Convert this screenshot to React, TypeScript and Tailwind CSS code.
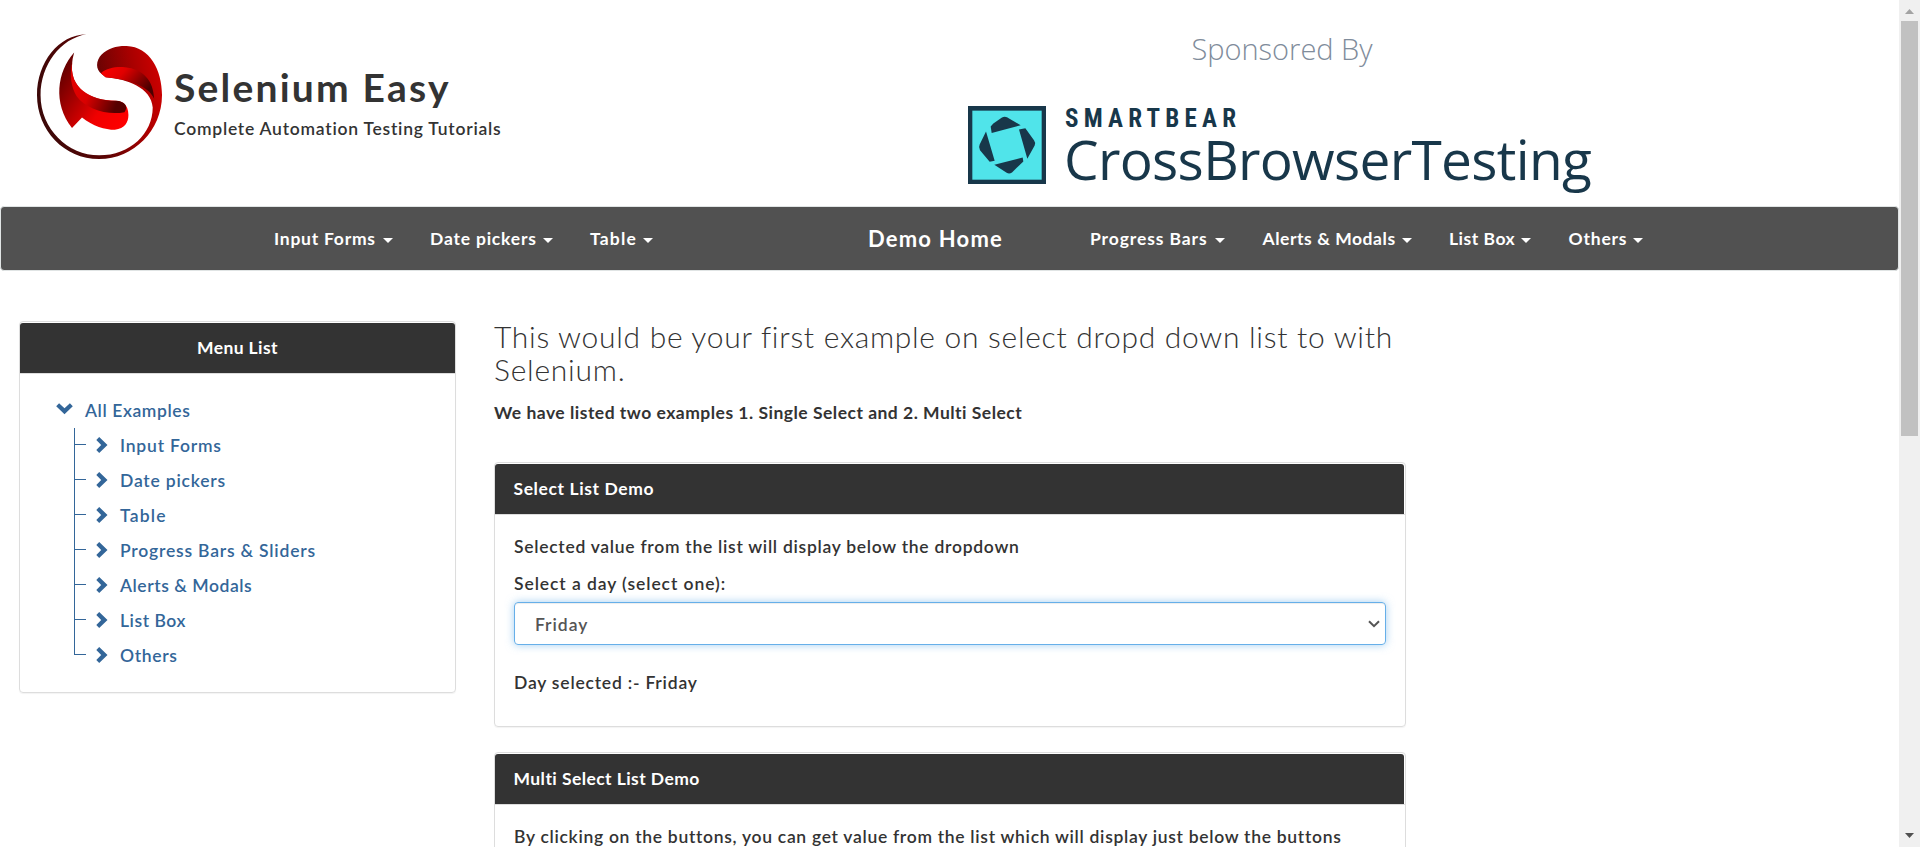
import { useState } from 'react';

const navLeft = [
  { label: 'Input Forms', box: 'w-[119px]', tracking: 'tracking-[0.75px]' },
  { label: 'Date pickers', box: 'w-[123px]', tracking: 'tracking-[0.8px]' },
  { label: 'Table', box: 'w-[63px]', tracking: 'tracking-[1.2px]' },
];

const navRight = [
  { label: 'Progress Bars', box: 'w-[135px]', tracking: 'tracking-[0.9px]' },
  { label: 'Alerts & Modals', box: 'w-[149px]', tracking: 'tracking-[0.55px]' },
  { label: 'List Box', box: 'w-[82px]', tracking: 'tracking-[0.5px]' },
  { label: 'Others', box: 'w-[74px]', tracking: 'tracking-[0.8px]' },
];

const tree = [
  { label: 'Input Forms', tracking: 'tracking-[0.8px]' },
  { label: 'Date pickers', tracking: 'tracking-[0.8px]' },
  { label: 'Table', tracking: 'tracking-[1.2px]' },
  { label: 'Progress Bars & Sliders', tracking: 'tracking-[0.8px]' },
  { label: 'Alerts & Modals', tracking: 'tracking-[0.55px]' },
  { label: 'List Box', tracking: 'tracking-[0.55px]' },
  { label: 'Others', tracking: 'tracking-[0.68px]' },
];

function SeleniumLogo() {
  return (
    <svg className="h-[125px] w-[125px] shrink-0" viewBox="104 101 350 376" preserveAspectRatio="none">
      <defs>
        <linearGradient id="ring" x1="0" x2="1" y1="0.6" y2="0.4">
          <stop offset="0" stopColor="#3a0808" />
          <stop offset="0.45" stopColor="#5a0404" />
          <stop offset="0.8" stopColor="#a80000" />
          <stop offset="1" stopColor="#cc0000" />
        </linearGradient>
        <linearGradient id="fold" x1="0" x2="1" y1="0" y2="0.5">
          <stop offset="0" stopColor="#ff0000" />
          <stop offset="0.4" stopColor="#e00000" />
          <stop offset="1" stopColor="#4a0000" />
        </linearGradient>
        <linearGradient id="leaf" x1="0" x2="1" y1="0.2" y2="0.9">
          <stop offset="0" stopColor="#5c0000" />
          <stop offset="0.3" stopColor="#a00000" />
          <stop offset="0.65" stopColor="#f00000" />
          <stop offset="1" stopColor="#ff0000" />
        </linearGradient>
        <linearGradient id="band" x1="0" x2="1" y1="0" y2="0.4">
          <stop offset="0" stopColor="#e80000" />
          <stop offset="0.5" stopColor="#d80000" />
          <stop offset="1" stopColor="#560000" />
        </linearGradient>
      </defs>
      <path
        fill="url(#ring)"
        d="M285 221C266 205 270 180 285 163C302 143 330 136 355 137C420 139 454 210 454 285C454 390 375 477 278 477C180 477 104 390 104 285C104 185 165 104 242 102C170 115 114 195 114 285C114 385 190 466 278 466C365 466 428 400 428 322C424 262 355 236 296 231Z"
      />
      <path fill="url(#fold)" d="M283 219C300 203 325 199 350 201C400 206 430 240 432 296C418 258 362 237 296 231Z" />
      <path
        fill="url(#leaf)"
        d="M208 157C160 215 148 310 202 384L230 352C260 378 295 389 322 389C350 386 360 367 360 345C360 312 342 303 325 302C250 302 180 262 208 157Z"
      />
      <path fill="url(#band)" d="M203 185C192 262 255 302 325 302C350 303 361 320 349 336C300 347 240 325 215 288C200 262 194 225 203 185Z" />
    </svg>
  );
}

function SmartBearMark() {
  return (
    <svg className="mt-px h-[78px] w-[78px] shrink-0" viewBox="24 31 234 235" preserveAspectRatio="none">
      <rect x="24" y="31" width="234" height="235" fill="#18374a" />
      <rect x="37" y="45" width="208" height="208" fill="#50e4ea" />
      <g fill="#18374a">
        <path d="M92 93L100 84L126 66Q133 62 141 65L182 89L95 112Z" />
        <path d="M177 102L196 98L222 134Q228 142 224 150L202 190Z" />
        <path d="M103 208L188 186L190 198L156 231Q148 237 140 232Z" />
        <path d="M78 108L104 196L89 199L60 164Q55 155 59 147Z" />
      </g>
    </svg>
  );
}

function NavItem({ label, box, tracking }: { label: string; box: string; tracking: string }) {
  return (
    <a className={`flex items-center justify-between font-bold whitespace-nowrap ${box}`}>
      <span className={tracking}>{label}</span>
      <span className="mt-[3px] block h-0 w-0 border-x-[5px] border-t-[5px] border-x-transparent border-t-white" />
    </a>
  );
}

function TreeRow({ label, tracking, last }: { label: string; tracking: string; last: boolean }) {
  return (
    <li className="flex h-[35px]">
      <span className="flex w-[12px] flex-col">
        <span className="h-[17px] border-b border-l border-[#336699]" />
        {!last && <span className="flex-1 border-l border-[#336699]" />}
      </span>
      <svg className="mt-[9px] ml-[10px] h-[16px] w-[12px]" viewBox="0 0 12 16">
        <path d="M3.2 0L11.5 8L3.2 16L0.3 13.1L5.2 8L0.3 2.9Z" fill="#336699" />
      </svg>
      <span className={`mt-[5px] ml-[12px] ${tracking}`}>{label}</span>
    </li>
  );
}

function Heading({ children, className }: { children: React.ReactNode; className: string }) {
  return <div className={`mt-px h-[50px] rounded-t-[3px] bg-[#333] pt-3 font-bold text-white ${className}`}>{children}</div>;
}

export default function App() {
  const [day] = useState('Friday');
  return (
    <div className="flex h-[847px] w-[1920px] overflow-hidden bg-white font-[Lato,sans-serif] text-[17.5px] leading-[25px] font-semibold text-[#333]">
      <div className="flex h-full w-[1899px] flex-col">
        <header className="flex h-[206px] shrink-0">
          <div className="flex w-[968px] pl-[37px]">
            <div className="pt-[34px]">
              <SeleniumLogo />
            </div>
            <div className="pt-[64px] pl-3">
              <h1 className="text-[39px] leading-[46px] font-bold tracking-[2.2px]">Selenium Easy</h1>
              <p className="mt-[6px] tracking-[0.76px]">Complete Automation Testing Tutorials</p>
            </div>
          </div>
          <div className="w-[628px] pt-[29px] font-['Open_Sans',sans-serif]">
            <p className="text-center text-[29px] leading-[40px] font-light text-[#7f8c9b]">Sponsored By</p>
            <div className="mt-[36px] flex text-[#18374a]">
              <SmartBearMark />
              <div className="pt-[2px] pl-[18px]">
                <p className="pl-px font-['Roboto_Condensed',Roboto,sans-serif] text-[25px] leading-[24px] font-bold tracking-[5.2px]">SMARTBEAR</p>
                <p className="text-[55px] leading-[55px] font-normal tracking-[-0.7px]">CrossBrowserTesting</p>
              </div>
            </div>
          </div>
        </header>

        <nav className="flex h-[65px] shrink-0 rounded-[4px] border border-[#e0e4e4] bg-[#515151] pl-[273px] text-white">
          <div className="flex w-[594px] gap-[37px]">
            {navLeft.map((n) => (
              <NavItem key={n.label} {...n} />
            ))}
          </div>
          <a className="flex w-[222px] items-center text-[22px] font-bold tracking-[1.2px] whitespace-nowrap">Demo Home</a>
          <div className="flex gap-[37.5px]">
            {navRight.map((n) => (
              <NavItem key={n.label} {...n} />
            ))}
          </div>
        </nav>

        <div className="flex items-start pl-[19px]">
          <aside className="mt-[50px] h-[372px] w-[437px] rounded-[4px] border border-[#ddd] shadow-[0_1px_1px_rgba(0,0,0,0.05)]">
            <Heading className="text-center tracking-[0.4px]">Menu List</Heading>
            <div className="border-t border-[#ddd] pt-6 pl-[36px] text-[#336699]">
              <div className="flex h-[30px]">
                <svg className="mt-[5px] h-[12px] w-[17px]" viewBox="0 0 17 12">
                  <path d="M0.2 3.2L3.1 0.3L8.5 5.3L13.9 0.3L16.8 3.2L8.5 11.3Z" fill="#336699" />
                </svg>
                <span className="ml-[12px] tracking-[0.6px]">All Examples</span>
              </div>
              <ul className="pl-[18px]">
                {tree.map((t, i) => (
                  <TreeRow key={t.label} {...t} last={i === tree.length - 1} />
                ))}
              </ul>
            </div>
          </aside>

          <main className="ml-[38px] w-[912px] pt-[49px]">
            <h2 className="text-[30px] leading-[33px] font-light">
              <span className="block tracking-[0.71px] whitespace-nowrap">This would be your first example on select dropd down list to with</span>
              <span className="block tracking-[0.75px]">Selenium.</span>
            </h2>
            <p className="mt-[14px] font-bold tracking-[0.49px]">We have listed two examples 1. Single Select and 2. Multi Select</p>

            <section className="mt-[37px] h-[265px] rounded-[4px] border border-[#ddd] shadow-[0_1px_1px_rgba(0,0,0,0.05)]">
              <Heading className="mr-px pl-[18.5px] tracking-[0.6px]">Select List Demo</Heading>
              <div className="border-t border-[#ddd] px-[19px] pt-[19px]">
                <p className="tracking-[0.72px]">Selected value from the list will display below the dropdown</p>
                <p className="mt-3 tracking-[0.92px]">Select a day (select one):</p>
                <div className="mt-[6px] flex h-[43px] items-center justify-between rounded-[4px] border border-[#66afe9] pr-[5px] pl-[20px] text-[#555] shadow-[inset_0_1px_1px_rgba(0,0,0,0.075),0_0_8px_rgba(102,175,233,0.6)]">
                  <span className="pt-px tracking-[0.95px]">{day}</span>
                  <svg className="h-[8px] w-[12px]" viewBox="0 0 12 8">
                    <path d="M1 1.2L6 6.2L11 1.2" fill="none" stroke="#555" strokeWidth="2" />
                  </svg>
                </div>
                <p className="mt-[25px] tracking-[0.79px]">Day selected :- {day}</p>
              </div>
            </section>

            <section className="mt-[25px] h-[265px] rounded-[4px] border border-[#ddd]">
              <Heading className="mr-px pl-[18.5px] tracking-[0.43px]">Multi Select List Demo</Heading>
              <div className="border-t border-[#ddd] px-[19px] pt-[19px]">
                <p className="tracking-[0.7px] whitespace-nowrap">
                  By clicking on the buttons, you can get value from the list which will display just below the buttons
                </p>
              </div>
            </section>
          </main>
        </div>
      </div>

      <div className="flex h-full w-[21px] flex-col items-center bg-[#f0f0f0]">
        <svg className="mt-[9px] h-[5px] w-[9px]" viewBox="0 0 9 5">
          <path d="M4.5 0L9 5H0Z" fill="#a3a3a3" />
        </svg>
        <div className="mt-[7px] h-[415px] w-[17px] bg-[#c1c1c1]" />
        <svg className="mt-auto mb-[9px] h-[5px] w-[9px]" viewBox="0 0 9 5">
          <path d="M0 0H9L4.5 5Z" fill="#505050" />
        </svg>
      </div>
    </div>
  );
}
